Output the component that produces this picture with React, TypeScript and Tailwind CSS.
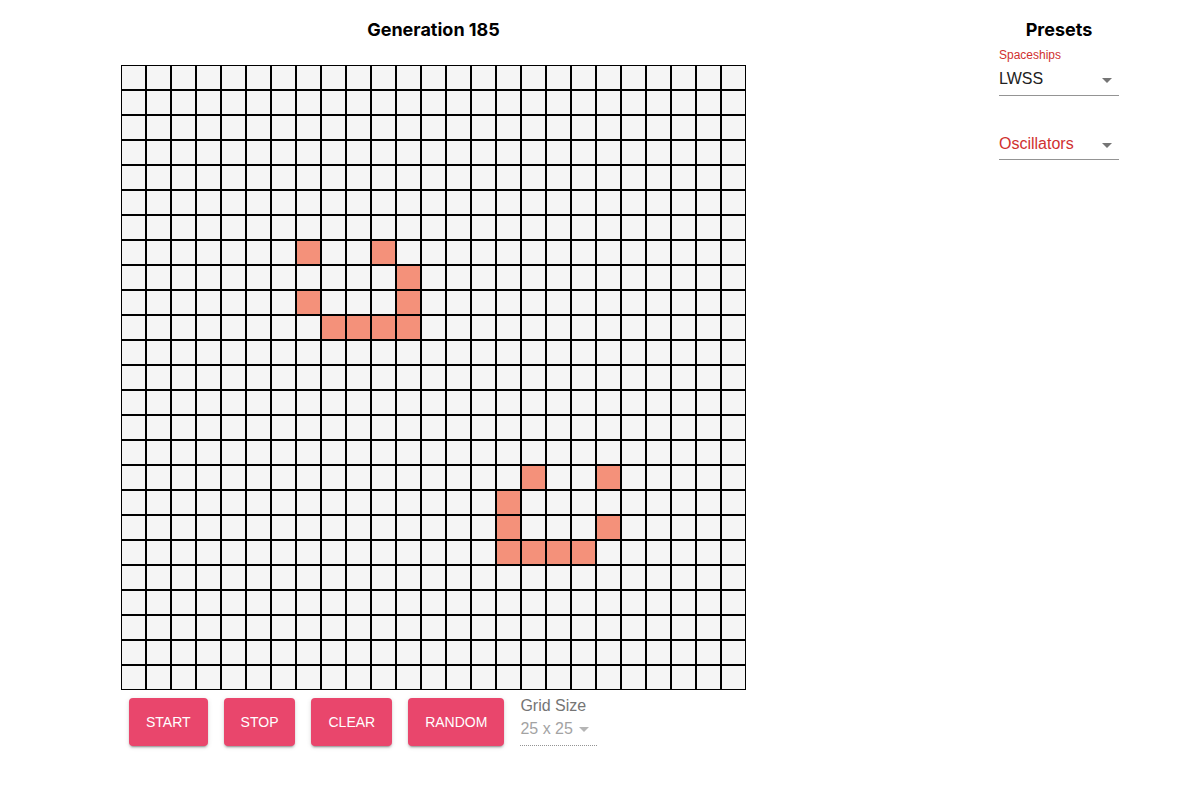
import React from "react";

const ALIVE = new Set([
  "7,7", "10,7", "11,8", "7,9", "11,9", "8,10", "9,10", "10,10", "11,10",
  "16,16", "19,16", "15,17", "15,18", "19,18", "15,19", "16,19", "17,19", "18,19",
]);

function Arrow({ color }: { color: string }) {
  return (
    <svg width="10" height="5" viewBox="0 0 10 5" className="shrink-0">
      <polygon points="0,0 10,0 5,5" fill={color} />
    </svg>
  );
}

const btn =
  "h-[48px] px-[17px] rounded-[4px] bg-[#E9466C] text-white text-[14px] leading-[48px] uppercase shadow-[0px_3px_1px_-2px_rgba(0,0,0,0.2),0px_2px_2px_0px_rgba(0,0,0,0.14),0px_1px_5px_0px_rgba(0,0,0,0.12)]";

export default function App() {
  const cells = [];
  for (let r = 0; r < 25; r++) {
    for (let c = 0; c < 25; c++) {
      const alive = ALIVE.has(`${c},${r}`);
      cells.push(
        <div
          key={`${r}-${c}`}
          className={`w-[25px] h-[25px] border border-black ${alive ? "bg-[#F4917A]" : "bg-[#F5F5F5]"}`}
        />
      );
    }
  }

  return (
    <div className="w-[1200px] h-[797px] bg-white flex font-['Liberation_Sans',Arial,sans-serif] text-black">
      <div className="ml-[121px] flex flex-col w-[625px]">
        <h1 className="mt-[20px] h-[20px] leading-[20px] text-[18px] font-bold text-center font-['Inter',sans-serif]">
          Generation 185
        </h1>
        <div className="mt-[25px] grid grid-cols-[repeat(25,25px)]">{cells}</div>
        <div className="mt-[8px] flex items-start pl-[8px] gap-[16px]">
          <button className={btn}>Start</button>
          <button className={btn}>Stop</button>
          <button className={btn}>Clear</button>
          <button className={btn}>Random</button>
          <div className="flex flex-col w-[77px]">
            <div className="mt-[1px] h-[14px] leading-[14px] text-[16px] text-[#757575]">Grid Size</div>
            <div className="mt-[6px] h-[27px] pb-[6px] border-b border-dotted border-[#949494] flex items-center justify-between text-[16px] leading-[20px] text-[#A3A3A3]">
              <span>25 x 25</span>
              <span className="mr-[8px]">
                <Arrow color="#B5B5B5" />
              </span>
            </div>
          </div>
        </div>
      </div>
      <div className="ml-[253px] w-[120px] flex flex-col">
        <h2 className="mt-[20px] h-[20px] leading-[20px] text-[18px] font-bold text-center font-['Inter',sans-serif]">Presets</h2>
        <div className="mt-[8px] h-[14px] leading-[14px] text-[12px] text-[#D0302F]">Spaceships</div>
        <div className="mt-[7px] h-[27px] pb-[6px] border-b border-[#949494] flex items-center justify-between text-[16px] leading-[20px] text-[#212121]">
          <span>LWSS</span>
          <span className="mr-[7px] mt-[2px]">
            <Arrow color="#757575" />
          </span>
        </div>
        <div className="mt-[37px] h-[27px] pt-[1px] pb-[5px] border-b border-[#949494] flex items-center justify-between text-[16px] leading-[20px] text-[#D0302F]">
          <span>Oscillators</span>
          <span className="mr-[7px] mt-[2px]">
            <Arrow color="#757575" />
          </span>
        </div>
      </div>
    </div>
  );
}
